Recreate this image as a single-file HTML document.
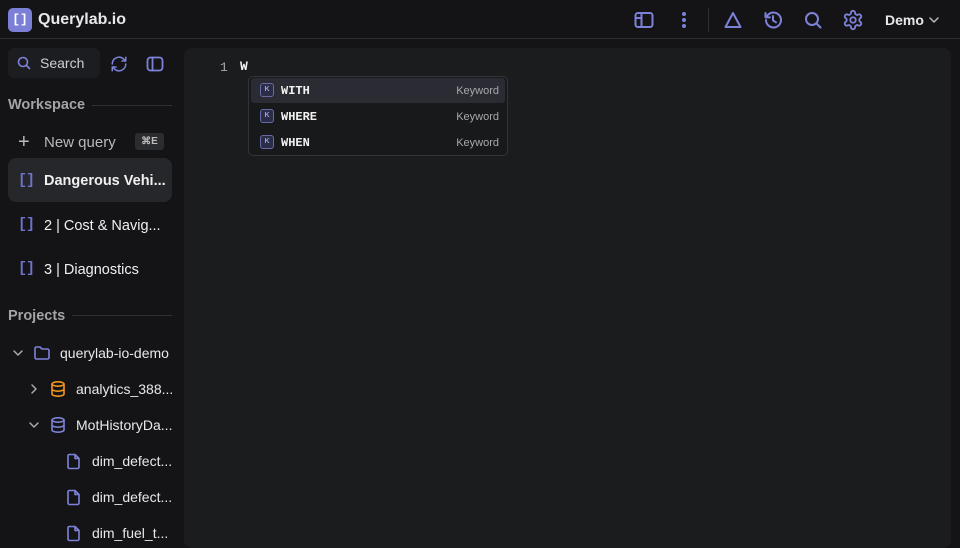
<!DOCTYPE html>
<html><head><meta charset="utf-8"><style>
*{margin:0;padding:0;box-sizing:border-box}
body{width:960px;height:540px;overflow:hidden;background:#141416;font-family:"Liberation Sans",sans-serif;color:#e8e8ea;position:relative}
.a{position:absolute}
.top{left:0;top:0;width:960px;height:39px;border-bottom:1px solid #2c2d31}
.logo{left:8px;top:8px;width:24px;height:24px;border-radius:5px;background:#7b7fd6;color:#fff;font:bold 13px "Liberation Mono",monospace;text-align:center;line-height:24px}
.t{white-space:nowrap}
svg{position:absolute;fill:none;stroke:#7d82d8;stroke-width:2;stroke-linecap:round;stroke-linejoin:round}
.br{color:#6e73c9;font:bold 15px "Liberation Mono",monospace;letter-spacing:-1px}
.item{font-size:14.5px;color:#f0f0f2}
.sec{font-size:14.5px;font-weight:bold;color:#a3a3a8}
.line{height:1px;background:#2e2f33}
.panel{left:184px;top:48px;width:767px;height:500px;background:#1b1c1e;border-radius:8px}
.dd{left:248px;top:76px;width:260px;height:80px;background:#18191b;border:1px solid #34353a;border-radius:5px}
.row{position:absolute;left:2px;width:254px;height:25px}
.row .k{position:absolute;left:9px;top:5px;width:14px;height:14px;border:1px solid #676aa6;border-radius:3px;background:#2b2c45;font:bold 7px sans-serif;color:#9ea1e0;text-align:center;line-height:12px}
.row .w{position:absolute;left:30px;top:6px;font:bold 12px "Liberation Mono",monospace;color:#f2f2f2}
.row .kw{position:absolute;right:6px;top:7px;font-size:11px;color:#a8a8ad}
</style></head><body>
<div class="a top"></div>
<div class="a logo">[]</div>
<div class="a t" style="left:38px;top:11px;font-size:16px;font-weight:bold">Querylab.io</div>

<svg style="left:634px;top:10px" width="20" height="20" viewBox="0 0 20 20"><rect x="1.5" y="3" width="17" height="14" rx="2.5"/><path d="M7.5 3v14M1.5 8h6"/></svg>
<svg style="left:674px;top:10px" width="20" height="20" viewBox="0 0 20 20"><circle cx="10" cy="4" r="1" fill="#7d82d8"/><circle cx="10" cy="10" r="1" fill="#7d82d8"/><circle cx="10" cy="16" r="1" fill="#7d82d8"/></svg>
<div class="a" style="left:708px;top:8px;width:1px;height:24px;background:#2e2f33"></div>
<svg style="left:723px;top:10px" width="20" height="20" viewBox="0 0 20 20"><path d="M10 3L17.5 17H2.5z"/></svg>
<svg style="left:762px;top:9px" width="22" height="22" viewBox="0 0 22 22"><path d="M4 11a7.5 7.5 0 1 0 2.2-5.3L3.5 8.4M3.5 4v4.4h4.4M11 7v4.5l3 1.8"/></svg>
<svg style="left:803px;top:10px" width="20" height="20" viewBox="0 0 20 20"><circle cx="9" cy="9" r="6"/><path d="M13.5 13.5l4 4"/></svg>
<svg style="left:842px;top:9px" width="22" height="22" viewBox="0 0 24 24"><path d="M12.22 2h-.44a2 2 0 0 0-2 2v.18a2 2 0 0 1-1 1.730l-.43.25a2 2 0 0 1-2 0l-.15-.08a2 2 0 0 0-2.73.73l-.22.38a2 2 0 0 0 .73 2.73l.15.1a2 2 0 0 1 1 1.72v.51a2 2 0 0 1-1 1.74l-.15.09a2 2 0 0 0-.73 2.73l.22.38a2 2 0 0 0 2.73.73l.15-.08a2 2 0 0 1 2 0l.43.25a2 2 0 0 1 1 1.73V20a2 2 0 0 0 2 2h.44a2 2 0 0 0 2-2v-.18a2 2 0 0 1 1-1.73l.43-.25a2 2 0 0 1 2 0l.15.08a2 2 0 0 0 2.73-.73l.22-.39a2 2 0 0 0-.73-2.73l-.15-.08a2 2 0 0 1-1-1.74v-.5a2 2 0 0 1 1-1.74l.15-.09a2 2 0 0 0 .73-2.73l-.22-.38a2 2 0 0 0-2.73-.73l-.15.08a2 2 0 0 1-2 0l-.43-.25a2 2 0 0 1-1-1.73V4a2 2 0 0 0-2-2z"/><circle cx="12" cy="12" r="3"/></svg>
<div class="a t" style="left:885px;top:12px;font-size:14px;font-weight:bold">Demo</div>
<svg style="left:928px;top:15px;stroke:#bbb;stroke-width:1.5" width="12" height="10" viewBox="0 0 12 10"><path d="M2 3l4 4 4-4"/></svg>

<div class="a" style="left:8px;top:48px;width:92px;height:30px;border-radius:6px;background:#1c1d20"></div>
<svg style="left:16px;top:55px;stroke-width:1.6" width="16" height="16" viewBox="0 0 16 16"><circle cx="7" cy="7" r="4.5"/><path d="M10.5 10.5l3 3"/></svg>
<div class="a t" style="left:40px;top:55px;font-size:14px;color:#cfcfd3">Search</div>
<svg style="left:110px;top:55px" width="18" height="18" viewBox="0 0 24 24"><path d="M3 12a9 9 0 0 1 15-6.7L21 8M21 3v5h-5M21 12a9 9 0 0 1-15 6.7L3 16M3 21v-5h5"/></svg>
<svg style="left:146px;top:55px;stroke-width:1.8" width="18" height="18" viewBox="0 0 18 18"><rect x="1.5" y="2.5" width="15" height="13" rx="3"/><path d="M6.5 2.5v13"/></svg>

<div class="a t sec" style="left:8px;top:97px">Workspace</div>
<div class="a line" style="left:92px;top:105px;width:80px"></div>
<div class="a t" style="left:18px;top:131px;font-size:20px;color:#b9b9bd;font-weight:300">+</div>
<div class="a t" style="left:44px;top:134px;font-size:15px;color:#b9b9bd">New query</div>
<div class="a" style="left:135px;top:133px;width:29px;height:17px;border-radius:3px;background:#2b2c30;font:bold 10px sans-serif;color:#bbb;text-align:center;line-height:17px">⌘E</div>

<div class="a" style="left:8px;top:158px;width:164px;height:44px;border-radius:8px;background:#26272a"></div>
<div class="a t br" style="left:18px;top:172px">[]</div>
<div class="a t item" style="left:44px;top:173px;font-weight:bold">Dangerous Vehi...</div>
<div class="a t br" style="left:18px;top:216px">[]</div>
<div class="a t item" style="left:44px;top:218px">2 | Cost &amp; Navig...</div>
<div class="a t br" style="left:18px;top:260px">[]</div>
<div class="a t item" style="left:44px;top:262px">3 | Diagnostics</div>

<div class="a t sec" style="left:8px;top:308px">Projects</div>
<div class="a line" style="left:72px;top:315px;width:100px"></div>

<svg style="left:12px;top:347px;stroke:#aaa;stroke-width:1.5" width="12" height="12" viewBox="0 0 12 12"><path d="M2 4l4 4 4-4"/></svg>
<svg style="left:33px;top:344px;stroke-width:1.6" width="18" height="18" viewBox="0 0 18 18"><path d="M2 4.5a1.5 1.5 0 0 1 1.5-1.5h3.5l2 2h5.5a1.5 1.5 0 0 1 1.5 1.5v7a1.5 1.5 0 0 1-1.5 1.5h-11a1.5 1.5 0 0 1-1.5-1.5z"/></svg>
<div class="a t" style="left:60px;top:345px;font-size:14px">querylab-io-demo</div>

<svg style="left:28px;top:383px;stroke:#aaa;stroke-width:1.5" width="12" height="12" viewBox="0 0 12 12"><path d="M4 2l4 4-4 4"/></svg>
<svg style="left:50px;top:380px;stroke:#f0961e;stroke-width:1.6" width="16" height="18" viewBox="0 0 16 18"><ellipse cx="8" cy="4" rx="6" ry="2.2"/><path d="M2 4v10c0 1.2 2.7 2.2 6 2.2s6-1 6-2.2V4M2 9c0 1.2 2.7 2.2 6 2.2s6-1 6-2.2"/></svg>
<div class="a t" style="left:76px;top:381px;font-size:14px">analytics_388...</div>

<svg style="left:28px;top:419px;stroke:#aaa;stroke-width:1.5" width="12" height="12" viewBox="0 0 12 12"><path d="M2 4l4 4 4-4"/></svg>
<svg style="left:50px;top:416px;stroke-width:1.6" width="16" height="18" viewBox="0 0 16 18"><ellipse cx="8" cy="4" rx="6" ry="2.2"/><path d="M2 4v10c0 1.2 2.7 2.2 6 2.2s6-1 6-2.2V4M2 9c0 1.2 2.7 2.2 6 2.2s6-1 6-2.2"/></svg>
<div class="a t" style="left:76px;top:417px;font-size:14px">MotHistoryDa...</div>

<svg style="left:66px;top:452px;stroke-width:1.6" width="16" height="18" viewBox="0 0 16 18"><path d="M3 2.5h6l4 4v8.5a1.5 1.5 0 0 1-1.5 1.5h-8A1.5 1.5 0 0 1 2 15V4a1.5 1.5 0 0 1 1-1.5zM9 2.5v4h4"/></svg>
<div class="a t" style="left:92px;top:453px;font-size:14px">dim_defect...</div>
<svg style="left:66px;top:488px;stroke-width:1.6" width="16" height="18" viewBox="0 0 16 18"><path d="M3 2.5h6l4 4v8.5a1.5 1.5 0 0 1-1.5 1.5h-8A1.5 1.5 0 0 1 2 15V4a1.5 1.5 0 0 1 1-1.5zM9 2.5v4h4"/></svg>
<div class="a t" style="left:92px;top:489px;font-size:14px">dim_defect...</div>
<svg style="left:66px;top:524px;stroke-width:1.6" width="16" height="18" viewBox="0 0 16 18"><path d="M3 2.5h6l4 4v8.5a1.5 1.5 0 0 1-1.5 1.5h-8A1.5 1.5 0 0 1 2 15V4a1.5 1.5 0 0 1 1-1.5zM9 2.5v4h4"/></svg>
<div class="a t" style="left:92px;top:525px;font-size:14px">dim_fuel_t...</div>

<div class="a panel"></div>
<div class="a t" style="left:220px;top:60px;font:13px 'Liberation Mono',monospace;color:#a8a8ad">1</div>
<div class="a t" style="left:240px;top:59px;font:bold 13px 'Liberation Mono',monospace;color:#f2f2f2">W</div>
<div class="a dd">
 <div class="row" style="top:1px;background:#2a2b33;border-radius:3px"><div class="k">K</div><div class="w">WITH</div><div class="kw">Keyword</div></div>
 <div class="row" style="top:27px"><div class="k">K</div><div class="w">WHERE</div><div class="kw">Keyword</div></div>
 <div class="row" style="top:53px"><div class="k">K</div><div class="w">WHEN</div><div class="kw">Keyword</div></div>
</div>
</body></html>
